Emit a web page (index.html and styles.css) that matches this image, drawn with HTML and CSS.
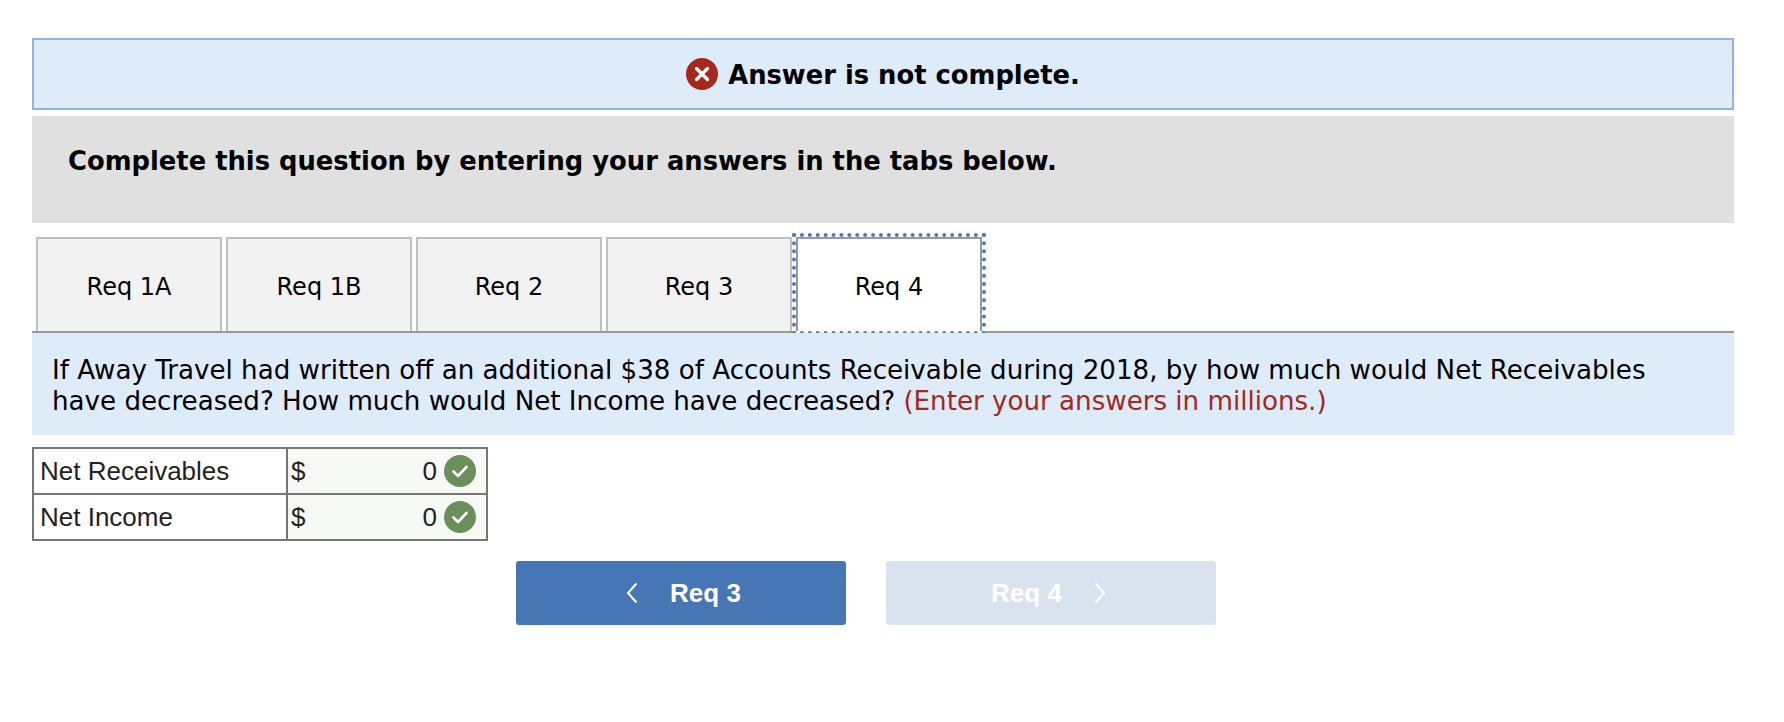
FILE: index.html
```html
<!DOCTYPE html>
<html lang="en">
<head>
    <meta charset="UTF-8">
    <title>Answer is not complete</title>
    <link rel="stylesheet" href="styles.css">
</head>
<body>
    <div class="result-box">
        <svg class="icon" viewBox="0 0 32 32"><circle cx="16" cy="16" r="16" fill="#a5281c"/><path d="M10.5 10.5 L21.5 21.5 M21.5 10.5 L10.5 21.5" stroke="#fff" stroke-width="3.2" stroke-linecap="round"/></svg>
        <span class="result-text">Answer is not complete.</span>
    </div>

    <div class="instructions">Complete this question by entering your answers in the tabs below.</div>

    <div class="tabs">
        <div class="tab">Req 1A</div>
        <div class="tab">Req 1B</div>
        <div class="tab">Req 2</div>
        <div class="tab">Req 3</div>
        <div class="tab active">Req 4</div>
    </div>

    <div class="question">
        If Away Travel had written off an additional $38 of Accounts Receivable during 2018, by how much would Net Receivables<br>
        have decreased? How much would Net Income have decreased? <span class="hint">(Enter your answers in millions.)</span>
    </div>

    <table class="answers">
        <tr>
            <td class="label">Net Receivables</td>
            <td class="value">
                <div class="value-row">
                    <span>$</span>
                    <span class="amount">0</span>
                    <svg class="check" viewBox="0 0 32 32"><circle cx="16" cy="16" r="16" fill="#6a8f5b"/><path d="M9.5 16.5 L14 21 L22.5 12" fill="none" stroke="#fff" stroke-width="2.6" stroke-linecap="round" stroke-linejoin="round"/></svg>
                </div>
            </td>
        </tr>
        <tr>
            <td class="label">Net Income</td>
            <td class="value">
                <div class="value-row">
                    <span>$</span>
                    <span class="amount">0</span>
                    <svg class="check" viewBox="0 0 32 32"><circle cx="16" cy="16" r="16" fill="#6a8f5b"/><path d="M9.5 16.5 L14 21 L22.5 12" fill="none" stroke="#fff" stroke-width="2.6" stroke-linecap="round" stroke-linejoin="round"/></svg>
                </div>
            </td>
        </tr>
    </table>

    <div class="nav">
        <div class="nav-btn">
            <svg class="chevron" viewBox="0 0 12 22"><path d="M10.5 1.5 L2 11 L10.5 20.5" fill="none" stroke="#fff" stroke-width="2"/></svg>
            <span>Req 3</span>
        </div>
        <div class="nav-btn disabled">
            <span>Req 4</span>
            <svg class="chevron" viewBox="0 0 12 22"><path d="M1.5 1.5 L10 11 L1.5 20.5" fill="none" stroke="#fff" stroke-width="2"/></svg>
        </div>
    </div>
</body>
</html>
```

FILE: styles.css
```css
body {
    margin: 0;
    padding: 38px 50px 0 32px;
    background-color: #fff;
    font-family: 'DejaVu Sans', Verdana, sans-serif;
    color: #000;
}
.result-box {
    height: 68px;
    border: 2px solid #93b5dc;
    background-color: #deebf8;
    display: flex;
    align-items: center;
    justify-content: center;
    gap: 10px;
    font-size: 25.8px;
    font-weight: bold;
}
.result-text {
    padding-top: 2px;
}
.icon {
    width: 32px;
    height: 32px;
}
.instructions {
    margin-top: 6px;
    height: 107px;
    box-sizing: border-box;
    padding: 30px 0 0 36px;
    background-color: #e0e0e0;
    font-size: 25.8px;
    font-weight: bold;
}
.tabs {
    display: flex;
    gap: 4px;
    margin-top: 14px;
    padding-left: 4px;
    border-bottom: 2px solid #999;
}
.tab {
    width: 186px;
    height: 94px;
    box-sizing: border-box;
    padding-top: 4px;
    border: 2px solid #c0c0c0;
    border-bottom: none;
    background-color: #f2f2f2;
    display: flex;
    align-items: center;
    justify-content: center;
    font-size: 24px;
}
.tab.active {
    background-color: #fff;
    border-color: #999;
    outline: 4px dotted #4a7cbd;
    box-shadow: 0 0 0 4px #fff;
    z-index: 1;
}
.question {
    position: relative;
    z-index: 2;
    height: 102px;
    box-sizing: border-box;
    padding: 22px 20px 0;
    background-color: #deebf8;
    font-size: 26.13px;
    line-height: 31px;
}
.hint {
    color: #a5281c;
}
.answers {
    margin-top: 12px;
    border-collapse: collapse;
    font-family: 'Liberation Sans', Arial, sans-serif;
    font-size: 26px;
    color: #222;
}
.answers td {
    border: 2px solid #777;
    height: 46px;
    box-sizing: border-box;
    padding: 0;
}
.label {
    width: 254px;
    padding-left: 6px !important;
}
.value {
    width: 200px;
    background-color: #f6f9f4;
}
.value-row {
    display: flex;
    align-items: center;
    padding: 0 10px 0 3px;
}
.amount {
    margin-left: auto;
    margin-right: 7px;
}
.check {
    width: 32px;
    height: 32px;
}
.nav {
    display: flex;
    gap: 40px;
    margin: 20px 0 0 484px;
}
.nav-btn {
    width: 330px;
    height: 64px;
    box-sizing: border-box;
    padding-left: 5px;
    border-radius: 3px;
    background-color: #4676b4;
    color: #fff;
    display: flex;
    align-items: center;
    justify-content: center;
    gap: 32px;
    font-family: 'Liberation Sans', Arial, sans-serif;
    font-size: 26px;
    font-weight: bold;
}
.nav-btn.disabled {
    padding-left: 0;
    padding-right: 5px;
    background-color: #d9e3ef;
}
.chevron {
    width: 12px;
    height: 22px;
}
```
